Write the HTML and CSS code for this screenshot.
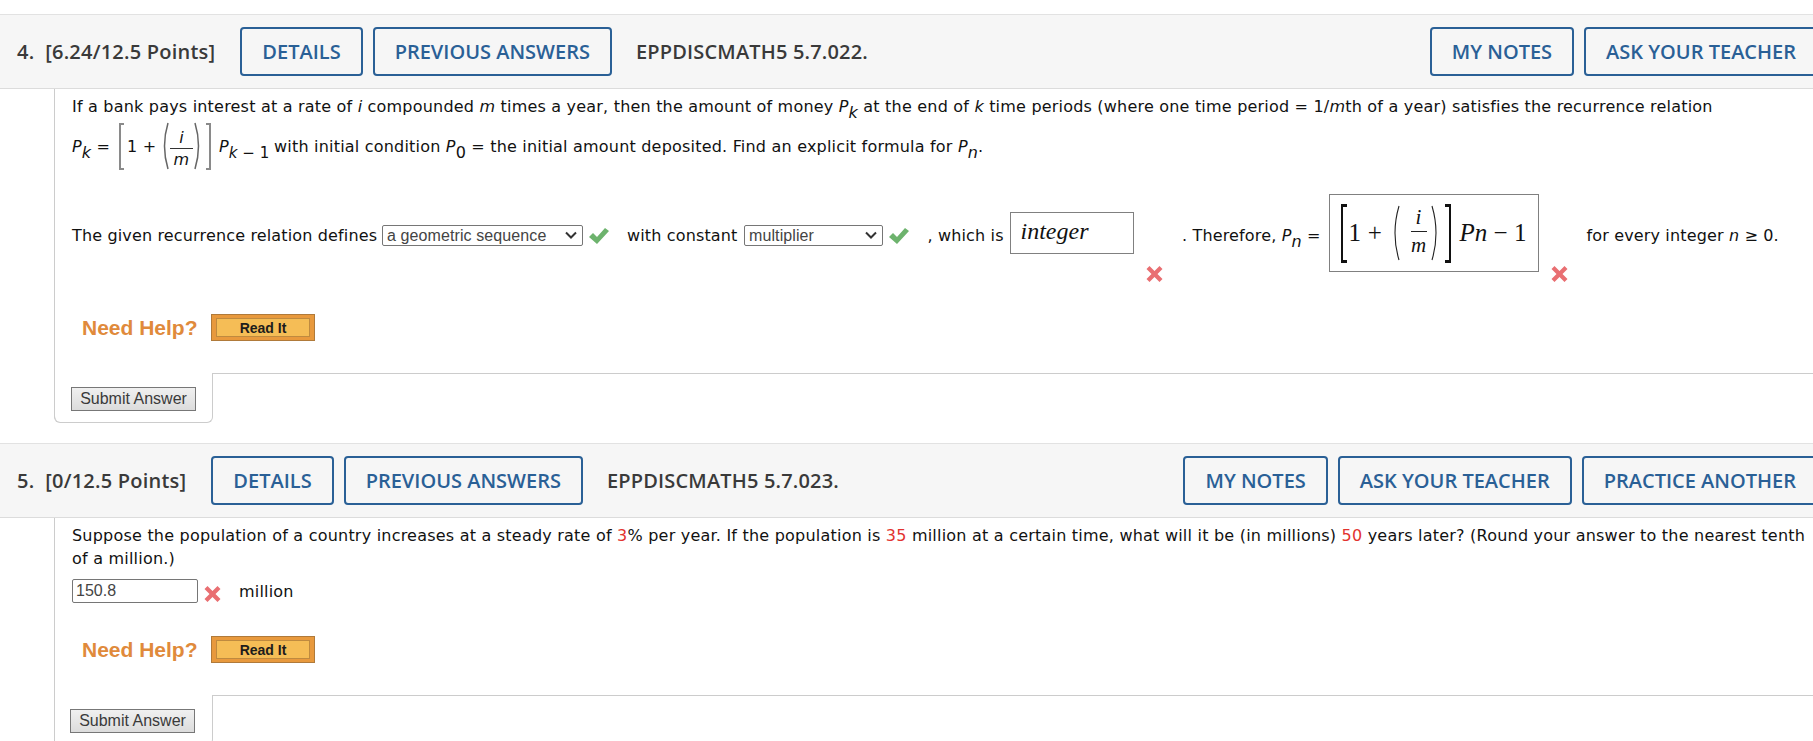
FILE: index.html
```html
<!DOCTYPE html>
<html lang="en">
<head>
<meta charset="utf-8">
<title>Questions</title>
<link rel="stylesheet" href="styles.css">
</head>
<body>
<section class="question q4">
  <header class="qhead">
    <span class="qtitle">4.&nbsp; [6.24/12.5 Points]</span>
    <a class="btn">DETAILS</a>
    <a class="btn">PREVIOUS ANSWERS</a>
    <span class="qcode">EPPDISCMATH5 5.7.022.</span>
    <div class="qactions">
      <a class="btn">MY NOTES</a>
      <a class="btn">ASK YOUR TEACHER</a>
    </div>
  </header>
  <div class="qbody">
    <p class="para">If a bank pays interest at a rate of <i>i</i> compounded <i>m</i> times a year, then the amount of money <i>P</i><sub><i>k</i></sub> at the end of <i>k</i> time periods (where one time period = 1/<i>m</i>th of a year) satisfies the recurrence relation</p>
    <div class="eq">
      <span class="eq-lhs"><i>P</i><sub><i>k</i></sub> =</span>
      <span class="br br-l"></span>
      <span class="eq-one">1 +</span>
      <svg class="paren" viewBox="0 0 9 48"><path d="M8 1Q1 24 8 47"/></svg>
      <span class="frac"><i>i</i><i class="frac-d">m</i></span>
      <svg class="paren" viewBox="0 0 9 48"><path d="M1 1Q8 24 1 47"/></svg>
      <span class="br br-r"></span>
      <span class="eq-rest"><i>P</i><sub><i>k</i> &minus; 1</sub></span>
      <span class="eq-tail">with initial condition <i>P</i><sub>0</sub> = the initial amount deposited. Find an explicit formula for <i>P</i><sub><i>n</i></sub>.</span>
    </div>
    <div class="answers">
      <span>The given recurrence relation defines</span>
      <select class="pick pick-a"><option>a geometric sequence</option></select>
      <svg class="mark-ok" viewBox="0 0 20 16"><path d="M0 9l4-4 4 4L16 0l4 3L8 16z"/></svg>
      <span>with constant</span>
      <select class="pick pick-b"><option>multiplier</option></select>
      <svg class="mark-ok" viewBox="0 0 20 16"><path d="M0 9l4-4 4 4L16 0l4 3L8 16z"/></svg>
      <span>, which is</span>
      <div class="mbox mbox-word"><i>integer</i></div>
      <svg class="mark-no low" viewBox="0 0 16 16"><path d="M3 0l5 5 5-5 3 3-5 5 5 5-3 3-5-5-5 5-3-3 5-5-5-5z"/></svg>
      <span>. Therefore, <i>P</i><sub><i>n</i></sub> =</span>
      <div class="mbox mbox-math">
        <span class="bbr bbr-l"></span>
        <span class="m-one">1+</span>
        <svg class="bparen" viewBox="0 0 9 56"><path d="M8 1Q0 28 8 55"/></svg>
        <span class="mfrac"><i>i</i><i class="mfrac-d">m</i></span>
        <svg class="bparen" viewBox="0 0 9 56"><path d="M1 1Q9 28 1 55"/></svg>
        <span class="bbr bbr-r"></span>
        <span class="m-rest"><i>Pn</i> &minus; 1</span>
      </div>
      <svg class="mark-no low" viewBox="0 0 16 16"><path d="M3 0l5 5 5-5 3 3-5 5 5 5-3 3-5-5-5 5-3-3 5-5-5-5z"/></svg>
      <span>for every integer <i>n</i> &ge; 0.</span>
    </div>
    <div class="help help-a">
      <span class="help-label">Need Help?</span>
      <a class="readit"><span>Read It</span></a>
    </div>
    <div class="foot">
      <div class="foot-tab"><button class="submit">Submit Answer</button></div>
      <div class="foot-rest"></div>
    </div>
  </div>
</section>

<section class="question q5">
  <header class="qhead">
    <span class="qtitle">5.&nbsp; [0/12.5 Points]</span>
    <a class="btn">DETAILS</a>
    <a class="btn">PREVIOUS ANSWERS</a>
    <span class="qcode">EPPDISCMATH5 5.7.023.</span>
    <div class="qactions">
      <a class="btn">MY NOTES</a>
      <a class="btn">ASK YOUR TEACHER</a>
      <a class="btn">PRACTICE ANOTHER</a>
    </div>
  </header>
  <div class="qbody">
    <p class="para">Suppose the population of a country increases at a steady rate of <span class="red">3</span>% per year. If the population is <span class="red">35</span> million at a certain time, what will it be (in millions) <span class="red">50</span> years later? (Round your answer to the nearest tenth of a million.)</p>
    <div class="numrow">
      <input class="num" type="text" value="150.8">
      <svg class="mark-no" viewBox="0 0 16 16"><path d="M3 0l5 5 5-5 3 3-5 5 5 5-3 3-5-5-5 5-3-3 5-5-5-5z"/></svg>
      <span class="unit">million</span>
    </div>
    <div class="help help-b">
      <span class="help-label">Need Help?</span>
      <a class="readit"><span>Read It</span></a>
    </div>
    <div class="foot foot-open">
      <div class="foot-tab"><button class="submit">Submit Answer</button></div>
      <div class="foot-rest"></div>
    </div>
  </div>
</section>
</body>
</html>
```

FILE: styles.css
```css
html, body { margin: 0; padding: 0; background: #fff; }
body {
  width: 1813px;
  height: 741px;
  overflow: hidden;
  padding-top: 14px;
  box-sizing: border-box;
  font-family: "DejaVu Sans", sans-serif;
  font-size: 16px;
  letter-spacing: 0.2px;
  color: #111;
}
.q5 { margin-top: 21px; }
.q5 .para { letter-spacing: 0.215px; }

.qhead {
  display: flex;
  align-items: center;
  height: 73px;
  padding-left: 17px;
  background: #f6f6f6;
  border-top: 1px solid #e2e2e2;
  border-bottom: 1px solid #dcdcdc;
  font-family: "Open Sans", sans-serif;
  font-weight: 600;
  font-size: 20px;
  letter-spacing: 0;
  white-space: nowrap;
}
.qtitle { color: #3a3a3a; margin-right: 25px; letter-spacing: 0.22px; }
.qcode { color: #3a3a3a; margin-left: 14px; letter-spacing: 0.17px; }
.btn {
  display: flex;
  align-items: center;
  box-sizing: border-box;
  height: 49px;
  padding: 0 20px;
  margin-right: 10px;
  border: 2px solid #2a6096;
  border-radius: 4px;
  color: #2a6096;
  flex-shrink: 0;
}
.qcode + .qactions { margin-left: auto; }
.qactions { display: flex; gap: 10px; margin-right: -5px; flex-shrink: 0; }
.qactions .btn { margin-right: 0; }

.qbody { margin-left: 54px; border-left: 1px solid #ccc; }
.para {
  margin: 0;
  padding: 6px 0 0 17px;
  line-height: 23px;
}
sub { font-size: 16px; line-height: 0; vertical-align: -6px; }
.red { color: #e2332f; }

.eq {
  display: flex;
  align-items: center;
  height: 48px;
  margin-top: 4px;
  padding-left: 17px;
  white-space: nowrap;
}
.eq-lhs { width: 47px; flex-shrink: 0; }
.br { width: 5px; height: 47px; border: 2px solid #8a8a8a; box-sizing: border-box; flex-shrink: 0; }
.br-l { border-right: 0; }
.br-r { border-left: 0; margin-left: 3px; }
.eq-one { margin-left: 3px; width: 33px; }
.paren { width: 9px; height: 48px; fill: none; stroke: #666; stroke-width: 1.5; flex-shrink: 0; }
.frac {
  display: flex;
  flex-direction: column;
  align-items: center;
  width: 23px;
  margin: 4px 1px 0;
  line-height: 21px;
}
.frac-d { border-top: 1px solid #333; width: 100%; text-align: center; }
.eq-rest { margin-left: 8px; width: 55px; flex-shrink: 0; }
.eq-rest sub { font-size: 15px; letter-spacing: 0; }

.answers {
  display: grid;
  grid-template-columns: 310px 207px 38px 117px 145px 38.5px 82px 136.5px 36px 146.5px 222.5px 35.5px auto;
  align-items: center;
  height: 78px;
  margin-top: 24px;
  padding-left: 17px;
  white-space: nowrap;
  letter-spacing: 0.15px;
}
.answers > span { position: relative; top: 2px; }
.pick {
  appearance: none;
  position: relative;
  top: 2px;
  box-sizing: border-box;
  height: 21px;
  padding: 0 0 0 4px;
  font-family: "Liberation Sans", sans-serif;
  font-size: 16px;
  letter-spacing: 0.1px;
  color: #444;
  background: #fff url("data:image/svg+xml,%3Csvg xmlns='http://www.w3.org/2000/svg' width='12' height='8'%3E%3Cpath d='M1 1.5l5 5 5-5' fill='none' stroke='%23333' stroke-width='2'/%3E%3C/svg%3E") no-repeat right 5px center;
  border: 1px solid #767676;
  border-radius: 2px;
}
.pick-a { width: 201px; }
.pick-b { width: 139px; }
.mark-ok { width: 20px; height: 16px; fill: #6db36d; position: relative; top: 3px; }
.mark-no { width: 17px; height: 16px; fill: #e96f72; }
.mark-no.low { align-self: end; margin-bottom: -10px; }
.mbox {
  box-sizing: border-box;
  border: 1px solid #808080;
  background: #fff;
  font-family: "Liberation Serif", serif;
  letter-spacing: 0;
  color: #111;
}
.mbox-word {
  width: 124px;
  height: 42px;
  padding: 3px 0 0 10px;
  font-size: 24px;
  line-height: 30px;
}
.mbox-math {
  width: 210px;
  height: 78px;
  display: flex;
  align-items: center;
  padding-left: 11px;
  font-size: 25px;
}
.bbr { width: 6px; height: 59px; box-sizing: border-box; border-style: solid; border-color: #111; flex-shrink: 0; }
.bbr-l { border-width: 3px 0 3px 2px; }
.bbr-r { border-width: 3px 2px 3px 0; margin-left: 5px; }
.m-one { margin-left: 2px; width: 42px; letter-spacing: 6.7px; flex-shrink: 0; }
.bparen { width: 9px; height: 56px; fill: none; stroke: #222; stroke-width: 1.1; flex-shrink: 0; }
.mfrac {
  display: flex;
  flex-direction: column;
  align-items: center;
  width: 16px;
  margin: 0 4px 4px 11px;
  font-size: 21px;
  line-height: 27px;
  flex-shrink: 0;
}
.mfrac-d { border-top: 1px solid #222; width: 100%; text-align: center; }
.m-rest { margin-left: 9px; }

.help { display: flex; align-items: center; padding-left: 27px; height: 27px; }
.help-a { margin-top: 42px; }
.help-b { margin-top: 33px; }
.help-label {
  width: 129px;
  font-family: "Liberation Sans", sans-serif;
  font-weight: 700;
  font-size: 21px;
  letter-spacing: 0;
  color: #e08a3b;
}
.readit {
  box-sizing: border-box;
  display: flex;
  width: 104px;
  height: 27px;
  padding: 3px 4px;
  background: #e8993d;
  border: 1px solid #b07a3a;
}
.readit span {
  flex: 1;
  border: 1px solid #bf8a3f;
  background: #f5bd56;
  color: #1c1c1c;
  font: 700 14px/18px "Liberation Sans", sans-serif;
  letter-spacing: 0;
  text-align: center;
}

.foot { display: flex; margin-top: 32px; height: 49px; }
.foot-tab {
  box-sizing: border-box;
  width: 158px;
  height: 50px;
  padding: 14px 0 0 15px;
  border-right: 1px solid #ccc;
  border-bottom: 1px solid #ccc;
  border-radius: 0 0 6px 0;
}
.foot-rest { flex: 1; border-top: 1px solid #ccc; }
.q4 .qbody { border-bottom-left-radius: 6px; }
.q4 .foot-tab { margin-left: -1px; width: 159px; padding-left: 16px; border-left: 1px solid #ccc; border-radius: 0 0 6px 6px; }
.foot-open .foot-tab { border-bottom: 0; }
.submit {
  box-sizing: border-box;
  width: 125px;
  height: 24px;
  padding: 0;
  border: 1px solid #777;
  background: linear-gradient(#f0f0f0, #dcdcdc);
  color: #3a3a3a;
  font: 16px "Liberation Sans", sans-serif;
  letter-spacing: 0;
}

.numrow { display: flex; align-items: center; margin-top: 9px; padding-left: 17px; height: 24px; }
.num {
  box-sizing: border-box;
  width: 126px;
  height: 24px;
  padding: 0 3px;
  border: 1px solid #767676;
  border-radius: 2px;
  font: 16px "Liberation Sans", sans-serif;
  color: #444;
}
.numrow .mark-no { margin-left: 6px; position: relative; top: 3px; }
.unit { margin-left: 18px; }
```
